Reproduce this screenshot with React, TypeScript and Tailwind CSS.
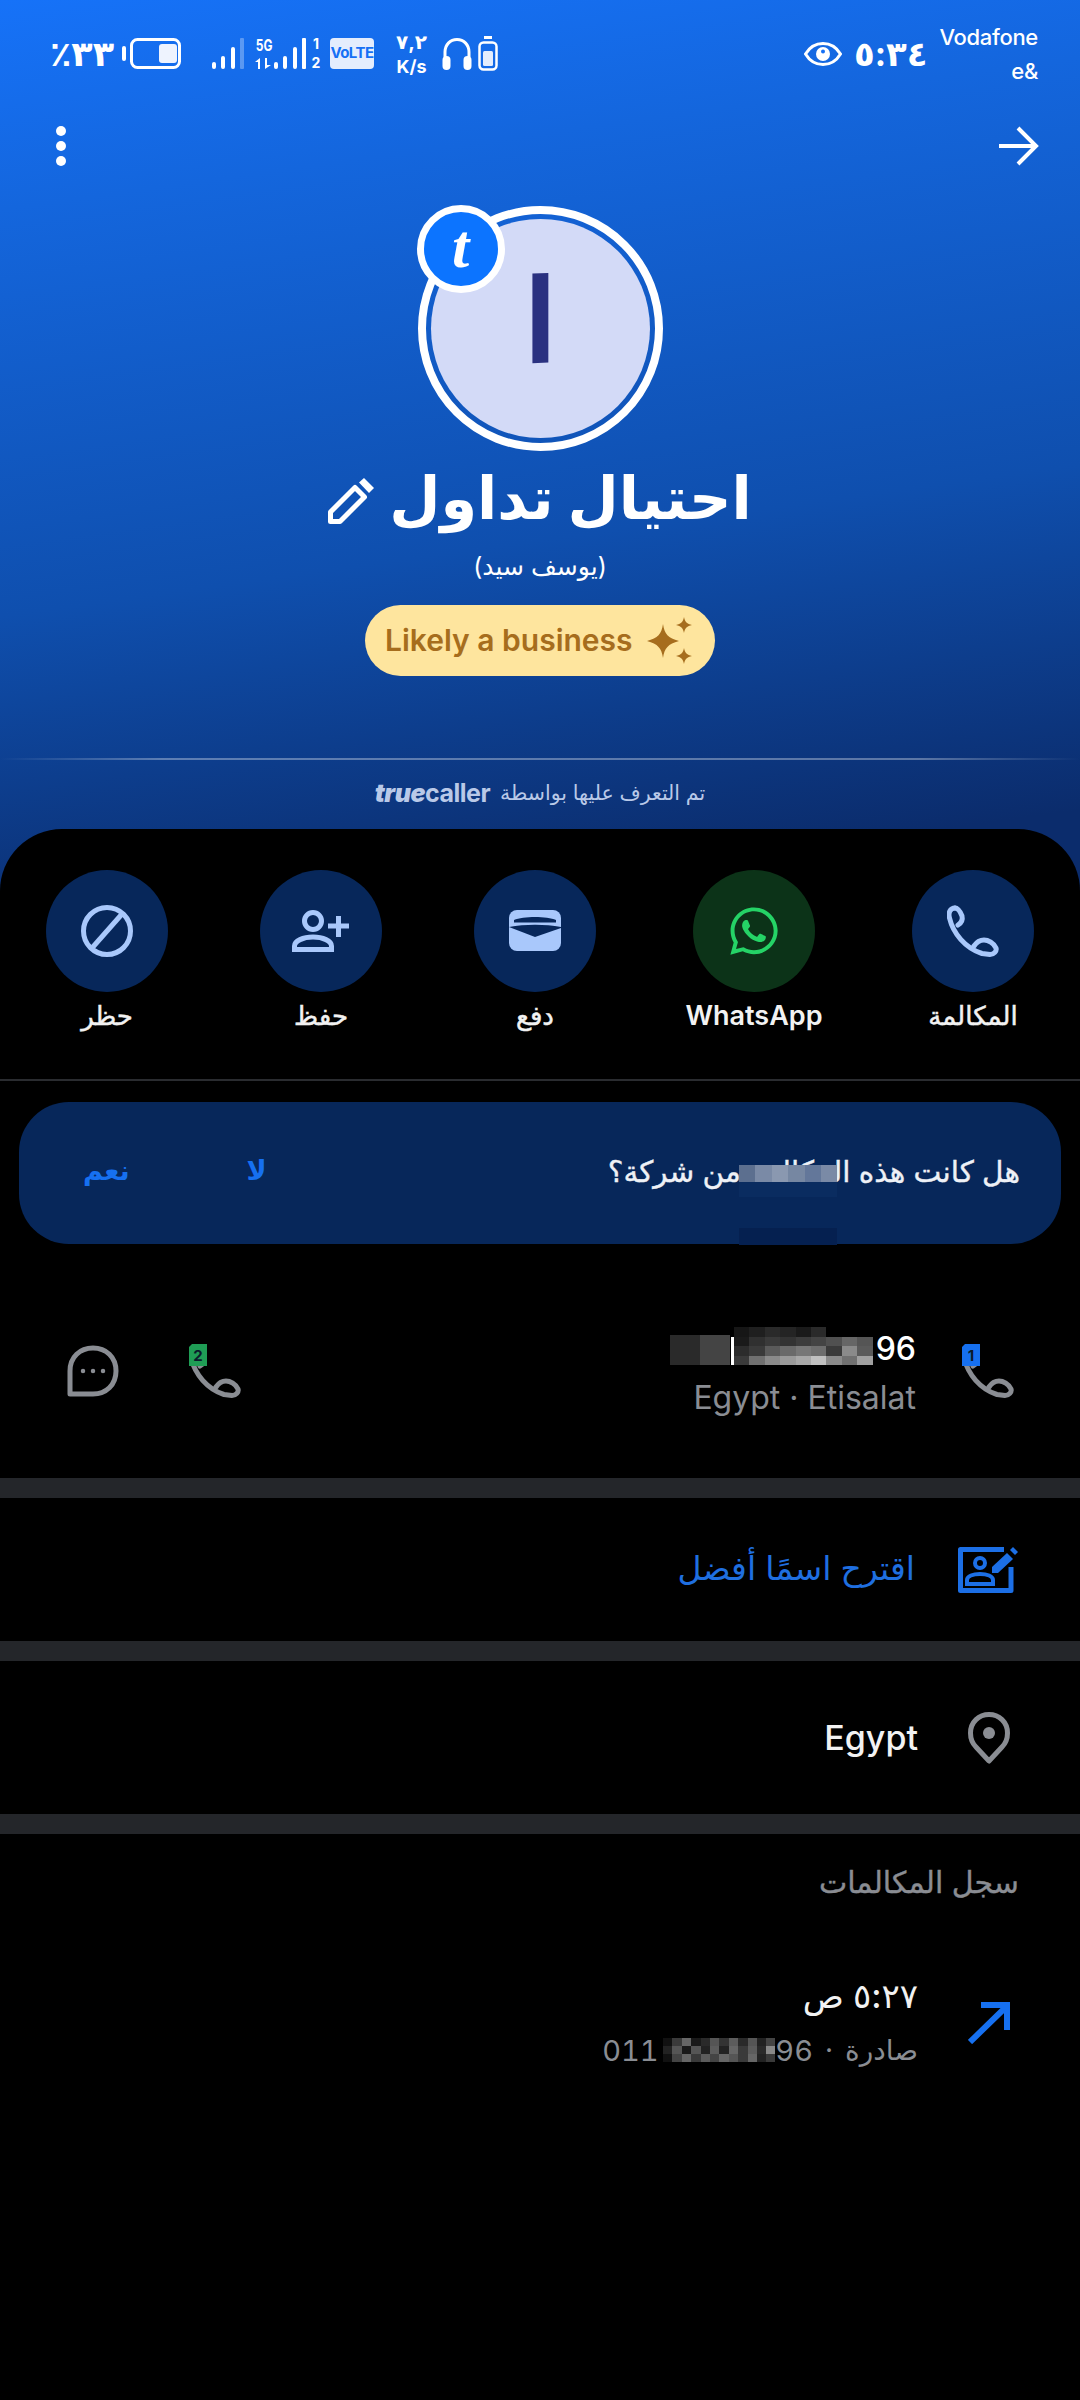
import { FaWhatsapp } from "react-icons/fa";

const blue = "#a9c8fb";

const Mosaic = ({ cols, w, h, cells }: { cols: number; w: number; h: number; cells: string[] }) => {
  const rows = Math.ceil(cells.length / cols);
  return (
    <svg width={cols * w} height={rows * h} shapeRendering="crispEdges" className="block">
      {cells.map((c, i) => (
        <rect key={i} x={(i % cols) * w} y={Math.floor(i / cols) * h} width={w} height={h} fill={c} />
      ))}
    </svg>
  );
};

const Bars = ({ dim }: { dim?: boolean }) => (
  <svg width="32" height="31" viewBox="0 0 32 31">
    <rect x="0" y="24" width="4" height="7" rx="2" fill="#fff" />
    <rect x="9" y="18" width="4" height="13" rx="2" fill="#fff" />
    <rect x="19" y="9" width="4" height="22" rx="2" fill="#fff" />
    <rect x="28" y="0" width="4" height="31" rx="1" fill="#fff" opacity={dim ? 0.3 : 1} />
  </svg>
);

const StatusBar = () => (
  <div dir="ltr" className="flex h-[106px] items-center pt-[1px] pl-[43px] pr-[42px] text-white">
    <span dir="rtl" className="w-[71px] text-[35px] font-bold leading-none whitespace-nowrap">٣٣٪</span>
    <svg width="59" height="31" viewBox="0 0 59 31" className="ml-[8px]">
      <rect x="0" y="8" width="4" height="15" rx="2" fill="#fff" />
      <rect x="9.5" y="1.5" width="48" height="28" rx="6" fill="none" stroke="#fff" strokeWidth="3" />
      <rect x="37" y="6" width="18" height="19" rx="3" fill="#eef3fe" />
    </svg>
    <div className="ml-[31px]"><Bars dim /></div>
    <div className="ml-[11px] flex w-[18px] flex-col items-center leading-none font-bold">
      <span className="scale-x-75 text-[16px] leading-[14px]">5G</span>
      <svg width="18" height="11" viewBox="0 0 18 11" className="mt-[6px]" fill="#fff">
        <path d="M5 0V11H3V4H0Z" />
        <path d="M10 0H12V7H16L10 11Z" />
      </svg>
    </div>
    <div className="ml-[1px]"><Bars /></div>
    <div className="ml-[6px] flex w-[8px] flex-col items-center text-[14px] font-bold leading-none gap-[5px]">
      <span>1</span>
      <span>2</span>
    </div>
    <span className="ml-[10px] flex h-[31px] w-[44px] items-center justify-center rounded-[4px] bg-[#e4edfd] text-[15px] font-bold tracking-[-0.5px] text-[#1570f5]">VoLTE</span>
    <div className="ml-[19px] flex w-[37px] flex-col items-center font-bold leading-none">
      <span className="text-[20px] leading-[22px]">٧,٢</span>
      <span className="mt-[5px] text-[18px]">K/s</span>
    </div>
    <svg width="30" height="33" viewBox="0 0 30 33" className="ml-[12px]" fill="none">
      <path d="M3 20V15C3 8 8 2.500 15 2.500S27 8 27 15V20" stroke="#fff" strokeWidth="3" />
      <rect x="0.500" y="19" width="8" height="14" rx="4" fill="#fff" />
      <rect x="21.500" y="19" width="8" height="14" rx="4" fill="#fff" />
    </svg>
    <svg width="20" height="35" viewBox="0 0 20 35" className="ml-[6px]" fill="none">
      <rect x="6" y="0" width="8" height="3" fill="#fff" />
      <rect x="1.500" y="6.500" width="17" height="27" rx="4" stroke="#fff" strokeWidth="2.500" />
      <rect x="5" y="15" width="10" height="15" rx="1.500" fill="#e4edfd" />
    </svg>
    <svg width="38" height="24" viewBox="0 0 38 24" className="ml-auto" fill="none">
      <path d="M1.500 12C6 4.500 12 1.500 19 1.500S32 4.500 36.500 12C32 19.500 26 22.500 19 22.500S6 19.500 1.500 12Z" stroke="#fff" strokeWidth="3" />
      <circle cx="19" cy="12" r="7" fill="#fff" />
      <circle cx="19" cy="9.500" r="2" fill="#1570f5" />
    </svg>
    <span className="ml-[12px] w-[71px] text-[34px] font-bold leading-none whitespace-nowrap">٥:٣٤</span>
    <div className="ml-[13px] flex w-[100px] flex-col items-end text-[22px] leading-[34px] font-medium whitespace-nowrap tracking-[-0.3px]">
      <span>Vodafone</span>
      <span>e&amp;</span>
    </div>
  </div>
);

const Toolbar = () => (
  <div dir="ltr" className="flex h-[80px] items-center justify-between pl-[56px] pr-[41px]">
    <div className="flex flex-col gap-[5px]">
      <span className="h-[10px] w-[10px] rounded-full bg-white" />
      <span className="h-[10px] w-[10px] rounded-full bg-white" />
      <span className="h-[10px] w-[10px] rounded-full bg-white" />
    </div>
    <svg width="40" height="40" viewBox="0 0 40 40" fill="none" stroke="#fff" strokeWidth="4">
      <path d="M0 20H37M19 2L37 20L19 38" />
    </svg>
  </div>
);

const Avatar = () => (
  <div className="relative mx-auto mt-[20px] h-[245px] w-[245px] rounded-full border-[8px] border-white p-[5px]">
    <div className="flex h-full w-full items-center justify-center rounded-full bg-[#d3daf7] text-[118px] leading-none text-[#2a3180]">
      <span className="-translate-y-[9px] scale-x-150 -skew-y-3">ا</span>
    </div>
    <div className="absolute left-[-9px] top-[-9px] flex h-[88px] w-[88px] items-center justify-center rounded-full border-[7px] border-white bg-[#0c74ff] font-['Liberation_Serif',serif] text-[62px] font-bold italic leading-none text-white">
      <span className="-mt-[6px]">t</span>
    </div>
  </div>
);

const Sparkle = () => (
  <svg width="46" height="52" viewBox="0 0 46 52" fill="#a66d1d">
    <path d="M16 9C17.500 19 21 23 32 26C21 29 17.500 33 16 43C14.500 33 11 29 0 26C11 23 14.500 19 16 9Z" />
    <path d="M37 2C38 7 40 9 45 10C40 11 38 13 37 18C36 13 34 11 29 10C34 9 36 7 37 2Z" />
    <path d="M37 33C38 38 40 40 45 41C40 42 38 44 37 49C36 44 34 42 29 41C34 40 36 38 37 33Z" />
  </svg>
);

const Identity = () => (
  <div className="flex flex-col items-center text-white">
    <div className="flex h-[92px] items-center" dir="ltr">
      <svg width="46" height="46" viewBox="0 0 46 46" fill="none" className="mt-[8px] mr-[15px]">
        <path d="M2.500 43.500V34L27 9.500L36.500 19L12 43.500Z" stroke="#fff" strokeWidth="5" strokeLinejoin="round" />
        <path d="M31 4.500L36 0L46 10L41 15Z" fill="#fff" />
      </svg>
      <span dir="rtl" className="text-[59px] font-bold leading-none whitespace-nowrap">احتيال تداول</span>
    </div>
    <span className="mt-[3px] h-[40px] text-[25px] leading-[40px] whitespace-nowrap">(يوسف سيد)</span>
    <div dir="ltr" className="mt-[19px] flex h-[71px] w-[350px] items-center rounded-full bg-[#fee59e] pl-[20px]">
      <span className="w-[262px] text-[30px] font-semibold whitespace-nowrap text-[#a66d1d]">Likely a business</span>
      <Sparkle />
    </div>
  </div>
);

const Credit = () => (
  <>
    <div className="mt-[82px] h-[2px] bg-[linear-gradient(90deg,transparent,#ffffff55_15%,#ffffff55_85%,transparent)]" />
    <div dir="ltr" className="mt-[18px] flex h-[30px] items-center justify-center gap-[10px] text-[#b9c9e8]">
      <span className="text-[25px] font-bold leading-none tracking-[-0.5px]">
        <i className="font-black">true</i>caller
      </span>
      <span dir="rtl" className="text-[20.500px] leading-none whitespace-nowrap">تم التعرف عليها بواسطة</span>
    </div>
  </>
);

const PhoneStroke = ({ color }: { color: string }) => (
  <g fill="none" stroke={color} strokeWidth="5" strokeLinejoin="round" strokeLinecap="round">
    <path d="M8 3C3 3 1 8 2.500 13C6 28 18 43 35 48.500L43 49.500C47 49.500 50 46 49 43C47 38 41 35 37 35C33 35 29 38 27 41" />
    <path d="M8 3C11 3 13 6 15 11C16 15 14 18 11 20" />
  </g>
);

const BanIcon = () => (
  <svg width="52" height="52" viewBox="0 0 52 52" fill="none" stroke={blue} strokeWidth="5">
    <circle cx="26" cy="26" r="23.500" />
    <path d="M11 43L41 9" />
  </svg>
);

const AddPersonIcon = () => (
  <svg width="58" height="42" viewBox="0 0 58 42" fill="none" stroke={blue} strokeWidth="5">
    <circle cx="21" cy="11" r="8.500" />
    <path d="M2.500 39.500V36C2.500 31 11 27 21 27S39.500 31 39.500 36V39.500Z" />
    <path d="M36 16H57M46.500 6V27" />
  </svg>
);

const WalletIcon = () => (
  <svg width="52" height="42" viewBox="0 0 52 42">
    <rect x="0" y="0" width="52" height="41" rx="8" fill={blue} />
    <path d="M5 10C14 6 38 6 47 10V12.500H5Z" fill="#07275a" />
    <path d="M0 17C16 14 36 14 52 17V18L26 27Z" fill="#07275a" />
  </svg>
);

const CallIcon = () => (
  <svg width="52" height="52" viewBox="0 0 52 52">
    <PhoneStroke color={blue} />
  </svg>
);

const arabicLabel = "[-webkit-text-stroke:0.5px_#f2f2f2]";

const actions = [
  { label: "المكالمة", icon: <CallIcon />, bg: "bg-[#07275a]", gap: "", text: arabicLabel },
  { label: "WhatsApp", icon: <FaWhatsapp size={54} color="#25d366" />, bg: "bg-[#0c3318]", gap: "ms-[97px]", text: "font-semibold text-[27px]" },
  { label: "دفع", icon: <WalletIcon />, bg: "bg-[#07275a]", gap: "ms-[97px]", text: arabicLabel },
  { label: "حفظ", icon: <AddPersonIcon />, bg: "bg-[#07275a]", gap: "ms-[92px]", text: arabicLabel },
  { label: "حظر", icon: <BanIcon />, bg: "bg-[#07275a]", gap: "ms-[92px]", text: arabicLabel },
];

const Actions = () => (
  <div className="mt-[21px] flex h-[252px] rounded-t-[62px] border-b-2 border-[#2a2c30] bg-black pt-[41px] ps-[46px]">
    {actions.map((a) => (
      <div key={a.label} className={`flex w-[122px] flex-col items-center ${a.gap}`}>
        <div className={`flex h-[122px] w-[122px] items-center justify-center rounded-full ${a.bg}`}>{a.icon}</div>
        <span className={`mt-[8px] text-[26px] leading-[32px] whitespace-nowrap text-[#f2f2f2] ${a.text}`}>{a.label}</span>
      </div>
    ))}
  </div>
);

const Banner = () => (
  <div className="relative mx-[19px] mt-[21px] flex h-[142px] items-start rounded-[50px] bg-[#07275a] pt-[49px] pe-[64px] ps-[41px]">
    <span className="text-[29.500px] leading-[40px] whitespace-nowrap text-[#eef1f6] [-webkit-text-stroke:0.4px_#eef1f6]">هل كانت هذه المكالمة من شركة؟</span>
    <span className="ms-auto w-[16px] text-center text-[27px] font-semibold leading-[40px] text-[#1670f0]">لا</span>
    <span className="ms-[121px] text-[27px] font-semibold leading-[40px] text-[#1670f0]">نعم</span>
    <div className="absolute right-[224px] top-[63px]">
      <Mosaic cols={6} w={16.4} h={17} cells={["#5c6f8f", "#7a8aa6", "#8a98b0", "#7687a2", "#63779a", "#7a8aa6"]} />
      <div className="h-[15px] w-[98px] bg-[#0a2c60]" />
    </div>
    <div className="absolute bottom-[-1px] right-[224px] h-[17px] w-[98px] bg-[#052050]" />
  </div>
);

const SimPhone = ({ sim, color }: { sim: string; color: string }) => (
  <svg width="52" height="54" viewBox="0 0 52 54">
    <g transform="translate(0 2)">
      <PhoneStroke color="#8a8d93" />
    </g>
    <path d="M3 0H18V22H0V3Z" fill={color} />
    <text x="9" y="17" textAnchor="middle" fontSize="15" fontWeight="700" fill="#0b1a2c" fontFamily="Inter">{sim}</text>
  </svg>
);

const MessageIcon = () => (
  <svg width="52" height="52" viewBox="0 0 52 52" fill="none" stroke="#8a8d93" strokeWidth="5">
    <path d="M3 49V26C3 12 13 3 26 3S49 12 49 26S39 49 26 49Z" strokeLinejoin="round" />
    <circle cx="16" cy="26" r="1.500" fill="#8a8d93" strokeWidth="1.500" />
    <circle cx="26" cy="26" r="1.500" fill="#8a8d93" strokeWidth="1.500" />
    <circle cx="36" cy="26" r="1.500" fill="#8a8d93" strokeWidth="1.500" />
  </svg>
);

const numberCells = [
  "#161616", "#1f1f1f", "#2a2a2a", "#242424", "#1a1a1a", "#2a2a2a", "#000000", "#000000", "#000000",
  "#1a1a1a", "#303030", "#3a3a3a", "#333333", "#3c3c3c", "#444444", "#505050", "#666666", "#555555",
  "#2c2c2c", "#3a3a3a", "#5a5a5a", "#6a6a6a", "#777777", "#6e6e6e", "#3a3a3a", "#8a8a8a", "#5a5a5a",
  "#3a3a3a", "#707070", "#8a8a8a", "#9a9a9a", "#a8a8a8", "#c0c0c0", "#8a8a8a", "#707070", "#a0a0a0",
];

const NumberRow = () => (
  <div className="flex h-[234px] items-center pt-[20px] pe-[67px] ps-[66px]">
    <SimPhone sim="1" color="#1670f0" />
    <div className="ms-[46px] flex flex-col items-start">
      <div dir="ltr" className="flex h-[38px] items-end">
        <div className="mb-[1px] h-[30px] w-[30px] bg-[#2a2a2a]" />
        <div className="mb-[1px] h-[30px] w-[30px] bg-[#444444]" />
        <span className="ml-[1px] mb-[1px] h-[28px] w-[3px] bg-white" />
        <div className="mb-[1px]"><Mosaic cols={9} w={15.4} h={9.500} cells={numberCells} /></div>
        <span className="ml-[3px] text-[32px] font-medium leading-[34px] text-white">96</span>
      </div>
      <span dir="ltr" className="mt-[15px] text-[32px] leading-[34px] whitespace-nowrap text-[#8a8d93]">Egypt · Etisalat</span>
    </div>
    <div className="ms-auto"><SimPhone sim="2" color="#1f9d55" /></div>
    <div className="ms-[70px]"><MessageIcon /></div>
  </div>
);

const Band = () => <div className="h-[20px] bg-[#24262a]" />;

const SuggestIcon = () => (
  <svg width="60" height="46" viewBox="0 0 60 46" fill="none">
    <path d="M53 20V43.500H2.500V2.500H46" stroke="#1c6fe6" strokeWidth="5" strokeLinejoin="round" />
    <circle cx="22" cy="16" r="5" stroke="#1c6fe6" strokeWidth="4" />
    <path d="M9 37V33C9 29 15 27 22 27S35 29 35 33V37Z" stroke="#1c6fe6" strokeWidth="4" />
    <path d="M34 26V20L49 6L55 12L40 26Z" fill="#1c6fe6" />
    <path d="M52 3L55 0L60 5L57 8Z" fill="#1c6fe6" />
  </svg>
);

const Suggest = () => (
  <div className="flex h-[143px] items-center ps-[62px]">
    <SuggestIcon />
    <span className="ms-[43px] -mt-[3px] text-[33px] leading-none whitespace-nowrap text-[#1f6fe0]">اقترح اسمًا أفضل</span>
  </div>
);

const Location = () => (
  <div className="flex h-[153px] items-center ps-[70px]">
    <svg width="42" height="52" viewBox="0 0 42 52" fill="none">
      <path d="M21 49L8 35C4 31 2.500 26 2.500 21C2.500 10 11 2.500 21 2.500S39.500 10 39.500 21C39.500 26 38 31 34 35Z" stroke="#8a8d93" strokeWidth="5" strokeLinejoin="round" />
      <circle cx="21" cy="21" r="6" fill="#8a8d93" />
    </svg>
    <span className="ms-[50px] text-[34px] font-medium leading-none text-[#f2f2f2]">Egypt</span>
  </div>
);

const logCells = [
  "#111111", "#3a3a3a", "#666666", "#1a1a1a", "#2a2a2a", "#555555", "#333333", "#5c5c5c", "#2a2a2a", "#555555", "#222222", "#444444",
  "#222222", "#555555", "#1a1a1a", "#555555", "#222222", "#5c5c5c", "#222222", "#666666", "#3a3a3a", "#5c5c5c", "#2a2a2a", "#888888",
  "#111111", "#444444", "#666666", "#3a3a3a", "#5c5c5c", "#444444", "#666666", "#555555", "#3a3a3a", "#666666", "#222222", "#3a3a3a",
];

const CallLog = () => (
  <div>
    <div className="mt-[30px] ps-[61px] text-[30px] leading-[36px] whitespace-nowrap text-[#8a8d93] [-webkit-text-stroke:0.4px_#8a8d93]">سجل المكالمات</div>
    <div className="mt-[78px] flex items-center ps-[70px]">
      <svg width="42" height="42" viewBox="0 0 42 42" fill="none" stroke="#1670f0" strokeWidth="6">
        <path d="M2 40L39 4M13 3H39V28" />
      </svg>
      <div className="ms-[50px] flex flex-col items-start">
        <span className="text-[34px] leading-[36px] font-medium whitespace-nowrap text-[#f2f2f2]">٥:٢٧ ص</span>
        <div className="mt-[19px] flex h-[34px] items-center text-[28px] leading-none whitespace-nowrap text-[#8a8d93]">
          <span>صادرة</span>
          <span className="mx-[12px]">·</span>
          <span dir="ltr" className="flex items-center text-[29px] tabular-nums">
            <span>011</span>
            <span className="ml-[4px]"><Mosaic cols={12} w={9.400} h={8} cells={logCells} /></span>
            <span>96</span>
          </span>
        </div>
      </div>
    </div>
  </div>
);

export default function App() {
  return (
    <div dir="rtl" className="h-[2400px] w-[1080px] overflow-hidden bg-black font-['Inter','DejaVu_Sans',sans-serif]">
      <div className="bg-[linear-gradient(172deg,#1672f8_0%,#1466dd_17%,#0f4fae_50%,#0b2c6c_78%)]">
        <StatusBar />
        <Toolbar />
        <Avatar />
        <Identity />
        <Credit />
        <Actions />
      </div>
      <Banner />
      <NumberRow />
      <Band />
      <Suggest />
      <Band />
      <Location />
      <Band />
      <CallLog />
    </div>
  );
}
